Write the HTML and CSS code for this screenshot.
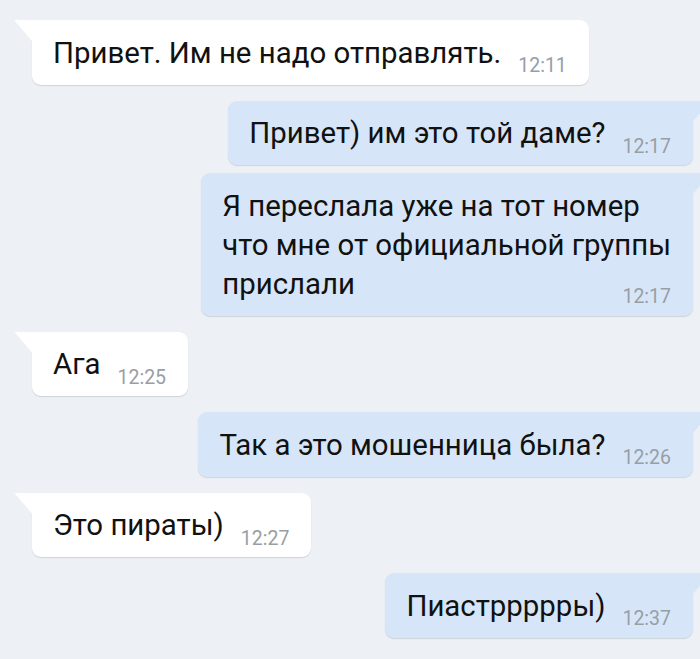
FILE: index.html
```html
<!DOCTYPE html>
<html lang="ru">
<head>
  <meta charset="UTF-8">
  <title>Диалог</title>
  <meta name="viewport" content="width=device-width, initial-scale=1.0">
  <link rel="stylesheet" href="styles.css">
</head>
<body>
  <div class="chat">
    <div class="msg in"><div class="bubble">Привет. Им не надо отправлять.<span class="time">12:11</span></div></div>
    <div class="msg out"><div class="bubble">Привет) им это той даме?<span class="time">12:17</span></div></div>
    <div class="msg out"><div class="bubble">Я переслала уже на тот номер<br>что мне от официальной группы<br>прислали<span class="time">12:17</span></div></div>
    <div class="msg in"><div class="bubble">Ага<span class="time">12:25</span></div></div>
    <div class="msg out"><div class="bubble">Так а это мошенница была?<span class="time">12:26</span></div></div>
    <div class="msg in"><div class="bubble">Это пираты)<span class="time">12:27</span></div></div>
    <div class="msg out"><div class="bubble">Пиастррррры)<span class="time">12:37</span></div></div>
  </div>
</body>
</html>
```

FILE: styles.css
```css
body{margin:0;background:#edf0f4;font-family:Roboto,"Noto Sans",sans-serif;color:#111}
.chat{display:flex;flex-direction:column;padding:20px 7px 20px 32px}

.msg{display:flex;margin-top:16px}
.msg:first-child{margin-top:0}
.out + .out{margin-top:8px}
.in{justify-content:flex-start}
.out{justify-content:flex-end}

/* пузырь + хвостик сверху */
.bubble{position:relative;max-width:600px;box-sizing:border-box;padding:13.5px 22px 9px 21px;
        background:#fff;border-radius:0 9px 9px 9px;font-size:29.4px;line-height:39px;
        box-shadow:0 1px 1px rgba(40,60,90,.16)}
.out .bubble{background:#d6e6f8;border-radius:9px 0 9px 9px}
.bubble::before{content:"";position:absolute;top:0;left:-18px;width:18px;height:21px;
                background:inherit;clip-path:polygon(0 0,100% 0,100% 100%)}
.out .bubble::before{left:auto;right:-18px;clip-path:polygon(0 0,100% 0,0 100%)}

.time{float:right;margin:22.5px 0 0 17px;font-size:19.5px;line-height:19.5px;color:#989ea5}
```
